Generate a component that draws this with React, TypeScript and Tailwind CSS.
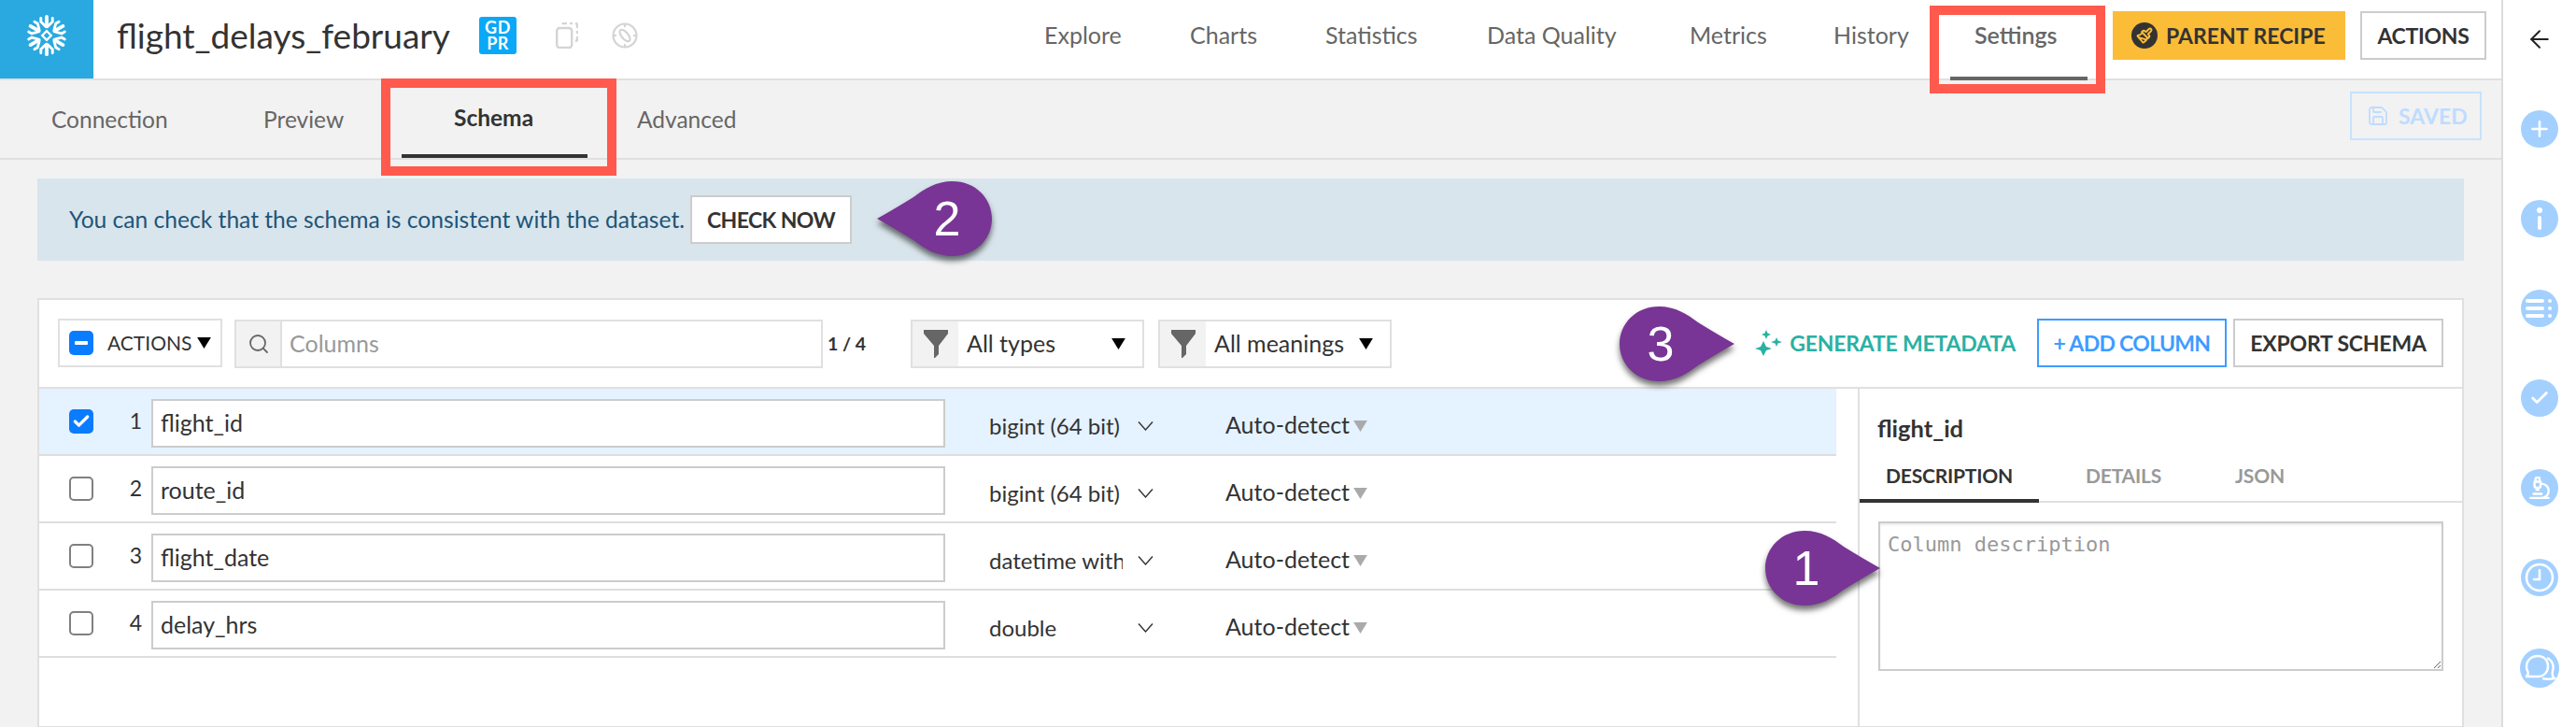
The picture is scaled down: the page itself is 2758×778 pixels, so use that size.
import { Check, Microscope, Paintbrush, Plus, Save, Search, ArrowLeft } from "lucide-react";
import type { ReactNode } from "react";

const rows = [
  { id: 1, name: "flight_id", type: "bigint (64 bit)", checked: true },
  { id: 2, name: "route_id", type: "bigint (64 bit)", checked: false },
  { id: 3, name: "flight_date", type: "datetime with tz", checked: false },
  { id: 4, name: "delay_hrs", type: "double", checked: false },
];

function Caret({ className }: { className: string }) {
  return (
    <svg viewBox="0 0 16 13" className={className}>
      <polygon points="0,0 16,0 8,13" fill="currentColor" />
    </svg>
  );
}

function Funnel() {
  return (
    <svg viewBox="0 0 26 30" className="h-[30px] w-[26px] text-[#666]">
      <path d="M0 0H26V4L16 17V26L12 30H11V17L0 4Z" fill="currentColor" />
    </svg>
  );
}

function Snowflake() {
  return (
    <svg viewBox="-24 -24 48 48" className="h-[46px] w-[46px]" fill="none" stroke="white" strokeLinecap="round" strokeWidth="4">
      {[0, 60, 120, 180, 240, 300].map((a) => (
        <g key={a} transform={`rotate(${a})`}>
          <path d="M0 -10V-21" />
          <path d="M6.500 -19.500L6.500 -15.500L1.500 -10.500M-6.500 -19.500L-6.500 -15.500L-1.500 -10.500" strokeWidth="3" />
        </g>
      ))}
      <path d="M0 -5L5 0L0 5L-5 0Z" strokeWidth="2.4" />
    </svg>
  );
}

function Marker({ label, flip, className }: { label: string; flip?: boolean; className: string }) {
  return (
    <div className={`absolute h-[80px] w-[123px] ${className}`}>
      <svg viewBox="0 0 123 80" className={`h-[80px] w-[123px] overflow-visible drop-shadow-[0_5px_3px_rgba(0,0,0,0.55)] ${flip ? "-scale-x-100" : ""}`}>
        <path
          d="M42 0C60 0 72 8 84 17Q105 30 123 40Q105 50 84 63C72 72 60 80 42 80C18 80 0 62 0 40C0 18 18 0 42 0Z"
          fill="#783595"
        />
      </svg>
      <span
        className={`absolute top-0 flex h-[80px] items-center justify-center font-['Liberation_Sans',sans-serif] text-[52px] leading-none text-white ${flip ? "right-0 w-[96px]" : "left-0 w-[88px]"}`}
      >
        {label}
      </span>
    </div>
  );
}

function SideIcon({ children, big }: { children: ReactNode; big?: boolean }) {
  return (
    <div className={`flex items-center justify-center rounded-full bg-[#a3d0ff] text-white ${big ? "h-[42px] w-[42px]" : "h-[40px] w-[40px]"}`}>
      {children}
    </div>
  );
}

function FilterSelect({ label }: { label: string }) {
  return (
    <div className="mt-[21px] flex h-[52px] w-[250px] border-2 border-[#e0e0e0] bg-white">
      <div className="flex w-[49px] items-center justify-center bg-[#f2f2f2]">
        <Funnel />
      </div>
      <div className="ml-[2px] flex items-center pl-[7px] text-[25px] text-[#333]">
        <span className="w-[155px]">{label}</span>
        <Caret className="h-[12px] w-[15px] text-black" />
      </div>
    </div>
  );
}

function Row({ row }: { row: (typeof rows)[number] }) {
  return (
    <div className={`flex h-[72px] items-start border-b-2 border-[#dedede] pl-[32px] ${row.checked ? "bg-[#e5f2ff]" : "bg-white"}`}>
      <div
        className={`mt-[22px] flex h-[26px] w-[26px] items-center justify-center rounded-[5px] ${row.checked ? "bg-[#0a7cff]" : "border-2 border-[#808080] bg-white"}`}
      >
        {row.checked && <Check className="h-[20px] w-[20px] text-white" strokeWidth={4} />}
      </div>
      <div className="mt-[20px] w-[52px] text-right text-[23px] leading-[28px] text-[#333]">{row.id}</div>
      <div className="mt-[11px] ml-[10px] flex h-[52px] w-[850px] items-center border-2 border-[#ccc] bg-white pl-[8px] text-[25px] text-[#333]">
        {row.name}
      </div>
      <div className="mt-[25px] ml-[47px] w-[143px] overflow-hidden text-[24px] leading-[30px] whitespace-nowrap text-[#333]">{row.type}</div>
      <svg viewBox="0 0 17 10" className="mt-[35px] ml-[16px] h-[10px] w-[17px]" fill="none" stroke="#333" strokeWidth="1.4">
        <path d="M1 0.500L8.500 9L16 0.500" />
      </svg>
      <div className="mt-[23px] ml-[77px] flex items-center text-[25px] leading-[30px] text-[#333]">
        Auto-detect
        <Caret className="mt-[4px] ml-[4px] h-[12px] w-[15px] text-[#aaa]" />
      </div>
    </div>
  );
}

export default function App() {
  return (
    <div className="relative flex h-[778px] w-[2758px] overflow-hidden bg-white font-['Lato',sans-serif] text-[#333]">
      <div className="w-[2680px] shrink-0 border-r-2 border-[#dcdcdc] bg-[#f2f2f2]">
        {/* top bar */}
        <div className="flex h-[86px] items-center border-b-2 border-[#e0e0e0] bg-white pb-[8px]">
          <div className="flex h-[84px] w-[100px] items-center justify-center self-start bg-[#29a9e0] pb-[8px]">
            <Snowflake />
          </div>
          <div className="ml-[25px] w-[388px] text-[37px] whitespace-nowrap text-[#333]">flight_delays_february</div>
          <div className="flex h-[40px] w-[40px] flex-col items-center justify-center rounded-[3px] bg-[#0aa8f7] text-[18px] leading-[17px] font-bold tracking-[0.5px] text-white">
            <span>GD</span>
            <span>PR</span>
          </div>
          <svg viewBox="0 0 24 28" className="ml-[42px] h-[28px] w-[24px]" fill="none" stroke="#d4d4d4" strokeWidth="2.4">
            <path d="M7 2a2 2 0 0 1 2-1h3M15 1h3M21 1a2 2 0 0 1 2 2v3M23 9v3M23 15v3a2 2 0 0 1-2 2" />
            <rect x="1.2" y="6" width="16" height="21" rx="3" />
          </svg>
          <svg viewBox="0 0 28 28" className="ml-[36px] h-[28px] w-[28px]" fill="none" stroke="#d4d4d4" strokeWidth="2.2">
            <circle cx="14" cy="14" r="12.5" />
            <path d="M14 1.5V5M14 23V26.5M1.5 14H5M23 14H26.5" />
            <ellipse cx="14" cy="14" rx="3.5" ry="7.5" transform="rotate(-40 14 14)" />
          </svg>
          <nav className="ml-[435px] flex text-[25px] text-[#666]">
            <span className="w-[156px]">Explore</span>
            <span className="w-[145px]">Charts</span>
            <span className="w-[173px]">Statistics</span>
            <span className="w-[217px]">Data Quality</span>
            <span className="w-[154px]">Metrics</span>
            <span className="w-[151px]">History</span>
            <span className="w-[148px] font-semibold">Settings</span>
          </nav>
          <div className="flex h-[52px] w-[249px] items-center bg-[#fbbc38] pl-[20px] text-[23px] font-bold text-[#333]">
            <span className="flex h-[28px] w-[28px] items-center justify-center rounded-full bg-[#333]">
              <Paintbrush className="h-[18px] w-[18px] text-[#fbbc38]" strokeWidth={2.5} />
            </span>
            <span className="ml-[9px]">PARENT RECIPE</span>
          </div>
          <div className="ml-[16px] flex h-[52px] w-[135px] items-center justify-center border-2 border-[#ccc] bg-white text-[23px] font-bold tracking-[-0.3px] text-[#333]">
            ACTIONS
          </div>
        </div>

        {/* sub tabs */}
        <div className="flex h-[85px] items-start border-b-2 border-[#e0e0e0] pl-[55px] text-[24.500px] text-[#666]">
          <span className="mt-[24px] w-[227px]">Connection</span>
          <span className="mt-[24px] w-[204px]">Preview</span>
          <span className="mt-[22px] w-[196px] font-bold text-[#333]">Schema</span>
          <span className="mt-[24px] w-[1834px]">Advanced</span>
          <div className="mt-[12px] flex h-[52px] w-[141px] items-center border-2 border-[#c7e2ff] pl-[16px] text-[23px] font-bold text-[#bfdcff]">
            <Save className="h-[24px] w-[24px]" strokeWidth={1.8} />
            <span className="ml-[10px]">SAVED</span>
          </div>
        </div>

        {/* check banner */}
        <div className="mt-[20px] ml-[40px] flex h-[88px] w-[2598px] items-center bg-[#d9e5ec] pl-[34px] text-[#1e5578]">
          <span className="w-[665px] text-[24.600px] whitespace-nowrap">You can check that the schema is consistent with the dataset.</span>
          <div className="flex h-[52px] w-[173px] items-center justify-center border-2 border-[#ccc] bg-white text-[23px] font-bold tracking-[-0.6px] text-[#333]">
            CHECK NOW
          </div>
        </div>

        {/* schema panel */}
        <div className="mt-[40px] ml-[40px] h-[460px] w-[2598px] border-2 border-[#e0e0e0] bg-white">
          <div className="flex h-[95px] items-start border-b-2 border-[#e0e0e0] pr-[20px] pl-[20px]">
            <div className="mt-[20px] flex h-[52px] w-[176px] items-center border-2 border-[#e0e0e0] pl-[10px] text-[21px] text-[#333]">
              <span className="flex h-[26px] w-[26px] items-center justify-center rounded-[5px] bg-[#0a7cff]">
                <span className="h-[4px] w-[14px] rounded-[1px] bg-white" />
              </span>
              <span className="ml-[15px]">ACTIONS</span>
              <Caret className="ml-[6px] h-[12px] w-[15px] text-black" />
            </div>
            <div className="mt-[21px] ml-[13px] flex h-[52px] w-[630px] border-2 border-[#e0e0e0]">
              <div className="flex w-[49px] items-center justify-center border-r-2 border-[#e0e0e0] bg-[#f2f2f2]">
                <Search className="h-[24px] w-[24px] text-[#666]" strokeWidth={1.8} />
              </div>
              <span className="flex items-center pl-[8px] text-[25px] text-[#999]">Columns</span>
            </div>
            <div className="mt-[21px] ml-[5px] flex h-[52px] w-[89px] items-center text-[19.500px] font-bold text-[#333]">1 / 4</div>
            <FilterSelect label="All types" />
            <div className="w-[15px]" />
            <FilterSelect label="All meanings" />
            <div className="mt-[20px] ml-auto flex h-[52px] items-center text-[23px] font-bold tracking-[-0.2px] text-[#2ab1a3]">
              <svg viewBox="0 0 29 28" className="h-[28px] w-[29px]" fill="#2ab1a3">
                <path d="M9 12L12 18L18 20L12 22L9 28L6 22L0 20L6 18Z" />
                <path d="M12 0L13.5 3.5L17 5L13.5 6.5L12 10L10.5 6.5L7 5L10.5 3.5Z" />
                <path d="M23 8L24.500 11.500L29 13L24.500 14.500L23 18L21.500 14.500L17 13L21.500 11.500Z" />
              </svg>
              <span className="ml-[8px]">GENERATE METADATA</span>
            </div>
            <div className="mt-[20px] ml-[23px] flex h-[52px] w-[203px] items-center justify-center border-2 border-[#3d9cff] text-[23px] font-bold tracking-[-0.7px] text-[#3d9cff]">
              + ADD COLUMN
            </div>
            <div className="mt-[20px] ml-[7px] flex h-[52px] w-[225px] items-center justify-center border-2 border-[#ccc] text-[23px] font-bold tracking-[-0.2px] text-[#333]">
              EXPORT SCHEMA
            </div>
          </div>

          <div className="flex">
            <div className="w-[1924px]">
              {rows.map((r) => (
                <Row key={r.id} row={r} />
              ))}
            </div>
            <div className="ml-[23px] h-[400px] flex-1 border-l-2 border-[#e0e0e0]">
              <div className="pt-[27px] pl-[19px] text-[25.500px] leading-[30px] font-bold text-[#333]">flight_id</div>
              <div className="mt-[16px] flex h-[49px] border-b-2 border-[#e0e0e0] text-[21px] leading-[30px] font-bold tracking-[-0.2px]">
                <span className="h-[49px] w-[192px] border-b-4 border-[#333] pt-[5px] text-center text-[#333]">DESCRIPTION</span>
                <span className="ml-[50px] w-[160px] pt-[5px] text-[#999]">DETAILS</span>
                <span className="pt-[5px] text-[#999]">JSON</span>
              </div>
              <div className="mt-[20px] pr-[20px] pl-[20px]">
                <textarea
                  placeholder="Column description"
                  className="block h-[160px] w-full border-2 border-[#ccc] px-[8px] py-[8px] font-['DejaVu_Sans_Mono',monospace] text-[22px] leading-[30px] shadow-[inset_0_2px_2px_rgba(0,0,0,0.08)] outline-none placeholder:text-[#999]"
                />
              </div>
            </div>
          </div>
        </div>
      </div>

      {/* right rail */}
      <div className="flex flex-1 flex-col items-center">
        <div className="flex h-[84px] items-center">
          <ArrowLeft className="h-[30px] w-[30px] text-[#222]" strokeWidth={1.6} />
        </div>
        <div className="mt-[34px] flex flex-col items-center gap-[56px]">
          <SideIcon>
            <Plus className="h-[26px] w-[26px]" strokeWidth={2.4} />
          </SideIcon>
          <SideIcon>
            <svg viewBox="0 0 20 28" className="h-[28px] w-[20px]" fill="white">
              <circle cx="10" cy="5" r="3" />
              <rect x="8" y="11" width="4" height="15" rx="2" />
            </svg>
          </SideIcon>
          <SideIcon>
            <svg viewBox="0 0 30 20" className="h-[20px] w-[30px]" fill="white">
              <rect x="0" y="0" width="20" height="4" rx="2" />
              <rect x="0" y="8" width="20" height="4" rx="2" />
              <rect x="0" y="16" width="20" height="4" rx="2" />
              <circle cx="26" cy="2" r="2" />
              <circle cx="26" cy="10" r="2" />
              <circle cx="26" cy="18" r="2" />
            </svg>
          </SideIcon>
          <SideIcon>
            <Check className="h-[22px] w-[22px]" strokeWidth={3} />
          </SideIcon>
          <SideIcon>
            <Microscope className="h-[26px] w-[26px]" strokeWidth={2.2} />
          </SideIcon>
          <SideIcon>
            <svg viewBox="0 0 32 32" className="h-[32px] w-[32px]" fill="none" stroke="white" strokeWidth="2.6">
              <circle cx="16" cy="16" r="14" />
              <path d="M16 8V18H10" strokeLinecap="round" />
            </svg>
          </SideIcon>
          <SideIcon big>
            <svg viewBox="0 0 36 30" className="h-[30px] w-[36px]" fill="none" stroke="white" strokeWidth="2.4">
              <path d="M16 2C23 2 27 7 27 13C27 19 23 24 16 24H3C6 23 6 21 5.500 19C4 17 4 15 4 13C4 7 9 2 16 2Z" />
              <path d="M26 4C31 6 34 12 32 18C31.500 21 32 25 34 26C29 27 25 27 21 26" />
            </svg>
          </SideIcon>
        </div>
      </div>

      {/* annotations */}
      <div className="absolute top-[6px] left-[2066px] h-[94px] w-[188px] border-[10px] border-[#ff5a4d]">
        <div className="absolute top-[66px] left-[12px] h-[4px] w-[147px] bg-[#666]" />
      </div>
      <div className="absolute top-[84px] left-[408px] h-[104px] w-[252px] border-[10px] border-[#ff5a4d]">
        <div className="absolute top-[71px] left-[12px] h-[4px] w-[199px] bg-[#333]" />
      </div>
      <Marker label="2" flip className="top-[194px] left-[939px]" />
      <Marker label="3" className="top-[328px] left-[1734px]" />
      <Marker label="1" className="top-[568px] left-[1890px]" />
    </div>
  );
}
